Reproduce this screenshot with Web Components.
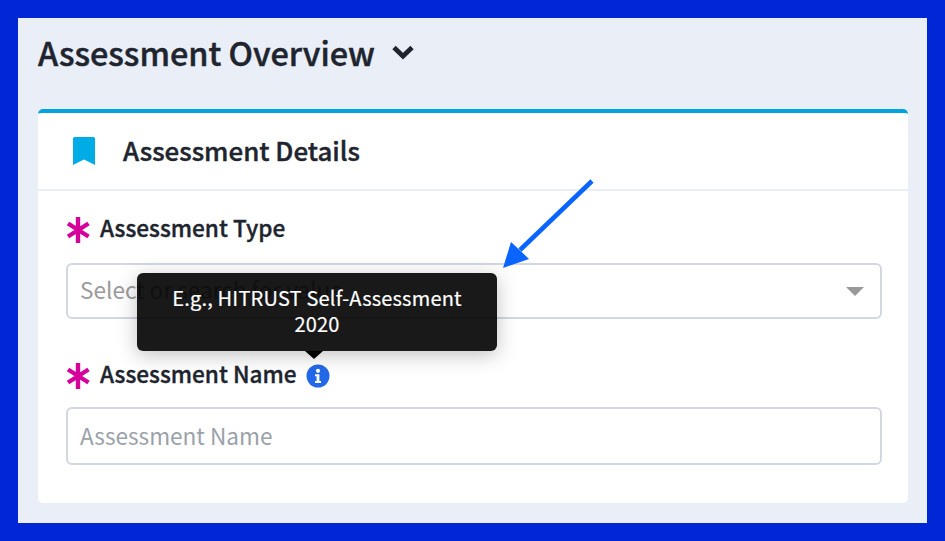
<!DOCTYPE html>
<html>
<head>
<meta charset="utf-8">
<style>
  html, body { margin: 0; height: 100%; }
  body { font-family: "Noto Sans CJK JP", "Open Sans", sans-serif; overflow: hidden; }
</style>
</head>
<body>
<overview-page>
  <section-title slot="title">Assessment Overview</section-title>
  <details-card>
    <span slot="title">Assessment Details</span>
    <form-field label="Assessment Type">
      <select-box placeholder="Select or search for value"></select-box>
    </form-field>
    <form-field label="Assessment Name" hint="E.g., HITRUST Self-Assessment 2020" class="second">
      <text-box placeholder="Assessment Name"></text-box>
    </form-field>
  </details-card>
</overview-page>

<script>
class OverviewPage extends HTMLElement {
  constructor() {
    super();
    this.attachShadow({ mode: 'open' });
    this.shadowRoot.innerHTML = `
      <style>
        :host {
          display: block;
          box-sizing: border-box;
          position: relative;
          width: 945px;
          height: 541px;
          border: solid #0026d6;
          border-width: 18px;
          background: #e9eef7;
          padding: 0 19px 0 20px;
        }
        svg { position: absolute; left: 482px; top: 158px; z-index: 5; }
      </style>
      <slot name="title"></slot>
      <slot></slot>
      <svg width="100" height="100" viewBox="0 0 100 100">
        <path d="M92 5 L20 74" stroke="#0a64ff" stroke-width="4.6" fill="none"/>
        <path d="M3 92 L29 83 L18.5 73 L11 66 Z" fill="#0a64ff"/>
      </svg>
    `;
  }
}

class SectionTitle extends HTMLElement {
  constructor() {
    super();
    this.attachShadow({ mode: 'open' });
    this.shadowRoot.innerHTML = `
      <style>
        :host {
          display: flex;
          align-items: center;
          height: 91px;
          padding-bottom: 23px;
          box-sizing: border-box;
          font-size: 32.4px;
          line-height: 40px;
          font-weight: 500;
          color: #20242e;
          -webkit-text-stroke: .45px #20242e;
        }
        svg { margin-left: 15px; }
      </style>
      <slot></slot>
      <svg width="26" height="18" viewBox="0 0 26 18">
        <path d="M4 4.5 L13 13.2 L22 4.5" fill="none" stroke="#20242e" stroke-width="4.8"/>
      </svg>
    `;
  }
}

class DetailsCard extends HTMLElement {
  constructor() {
    super();
    this.attachShadow({ mode: 'open' });
    this.shadowRoot.innerHTML = `
      <style>
        :host {
          display: block;
          box-sizing: border-box;
          height: 394px;
          background: #fff;
          border-top: 4px solid #00a3e0;
          border-radius: 5px;
        }
        header {
          display: flex;
          align-items: center;
          box-sizing: border-box;
          height: 78px;
          border-bottom: 2px solid #ebeff5;
          padding-left: 35px;
          font-size: 25.9px;
          line-height: 32px;
          font-weight: 500;
          color: #20242e;
          -webkit-text-stroke: .4px #20242e;
        }
        header span { display: block; margin-top: -2px; }
        svg { margin-right: 28px; }
        .body { padding: 19px 26px 0 28px; }
      </style>
      <header>
        <svg width="22" height="28" viewBox="0 0 22 28">
          <path d="M0 1.5 Q0 0 1.5 0 L20.5 0 Q22 0 22 1.5 L22 28 L11 22.5 L0 28 Z" fill="#00ace6"/>
        </svg>
        <span><slot name="title"></slot></span>
      </header>
      <div class="body"><slot></slot></div>
    `;
  }
}

class FormField extends HTMLElement {
  constructor() {
    super();
    this.attachShadow({ mode: 'open' });
    const hint = this.getAttribute('hint');
    this.shadowRoot.innerHTML = `
      <style>
        :host { display: block; position: relative; }
        :host(.second) { margin-top: 37px; }
        label {
          display: flex;
          align-items: center;
          height: 36px;
          margin-bottom: 17px;
          font-size: 22.6px;
          line-height: 30px;
          font-weight: 500;
          color: #20242e;
          -webkit-text-stroke: .35px #20242e;
        }
        :host(.second) label { margin-bottom: 15px; }
        .star { width: 24px; height: 26px; margin: 4px 10px 0 0; flex: none; }
        .info { margin: 3px 0 0 9px; flex: none; }
        .tip {
          position: absolute;
          left: 71px;
          top: -83px;
          width: 360px;
          height: 78px;
          box-sizing: border-box;
          padding: 12px 20px;
          background: rgba(0,0,0,.9);
          border-radius: 6px;
          box-shadow: 0 4px 20px rgba(0,0,0,.25);
          color: #fff;
          text-align: center;
          font-size: 20px;
          line-height: 26px;
          font-weight: 400;
          letter-spacing: .2px;
          -webkit-text-stroke: .2px #fff;
        }
        .tip::after {
          content: "";
          position: absolute;
          left: 168px;
          bottom: -8px;
          border: solid transparent;
          border-width: 8px 9px 0 9px;
          border-top-color: #000;
        }
      </style>
      <label>
        <svg class="star" viewBox="0 0 24 26">
          <path d="M12 0V26M2 6.5L22.5 19.5M22.5 6.5L2 19.5" stroke="#d6009a" stroke-width="4.4" fill="none"/>
        </svg>
        <span>${this.getAttribute('label')}</span>
        ${hint ? `<svg class="info" width="24" height="24" viewBox="0 0 24 24">
          <circle cx="12" cy="12" r="11.5" fill="#2368e8"/>
          <circle cx="12" cy="6.8" r="2.1" fill="#fff"/>
          <path d="M9 10.2h4.4v6.7h1.6v2H9v-2h1.6v-4.7H9z" fill="#fff"/>
        </svg>` : ''}
      </label>
      <slot></slot>
      ${hint ? `<div class="tip">${hint}</div>` : ''}
    `;
  }
}

class SelectBox extends HTMLElement {
  constructor() {
    super();
    this.attachShadow({ mode: 'open' });
    this.shadowRoot.innerHTML = `
      <style>
        :host {
          display: flex;
          align-items: center;
          justify-content: space-between;
          box-sizing: border-box;
          height: 56px;
          padding: 0 16px 0 12px;
          background: #fff;
          border: 2px solid #d2d7e2;
          border-radius: 6px;
          font-size: 22.6px;
          line-height: 30px;
          color: #9a9a9a;
        }
        span { margin-top: -2px; }
        i { border: solid transparent; border-width: 9px 9px 0 9px; border-top-color: #999; }
      </style>
      <span>${this.getAttribute('placeholder')}</span>
      <i></i>
    `;
  }
}

class TextBox extends HTMLElement {
  constructor() {
    super();
    this.attachShadow({ mode: 'open' });
    this.shadowRoot.innerHTML = `
      <style>
        :host {
          display: flex;
          align-items: center;
          box-sizing: border-box;
          height: 58px;
          padding: 0 12px;
          background: #fff;
          border: 2px solid #d2d7e2;
          border-radius: 6px;
          font-size: 22.6px;
          line-height: 30px;
          color: #9aa1a9;
        }
      </style>
      <span>${this.getAttribute('placeholder')}</span>
    `;
  }
}

customElements.define('overview-page', OverviewPage);
customElements.define('section-title', SectionTitle);
customElements.define('details-card', DetailsCard);
customElements.define('form-field', FormField);
customElements.define('select-box', SelectBox);
customElements.define('text-box', TextBox);
</script>
</body>
</html>
